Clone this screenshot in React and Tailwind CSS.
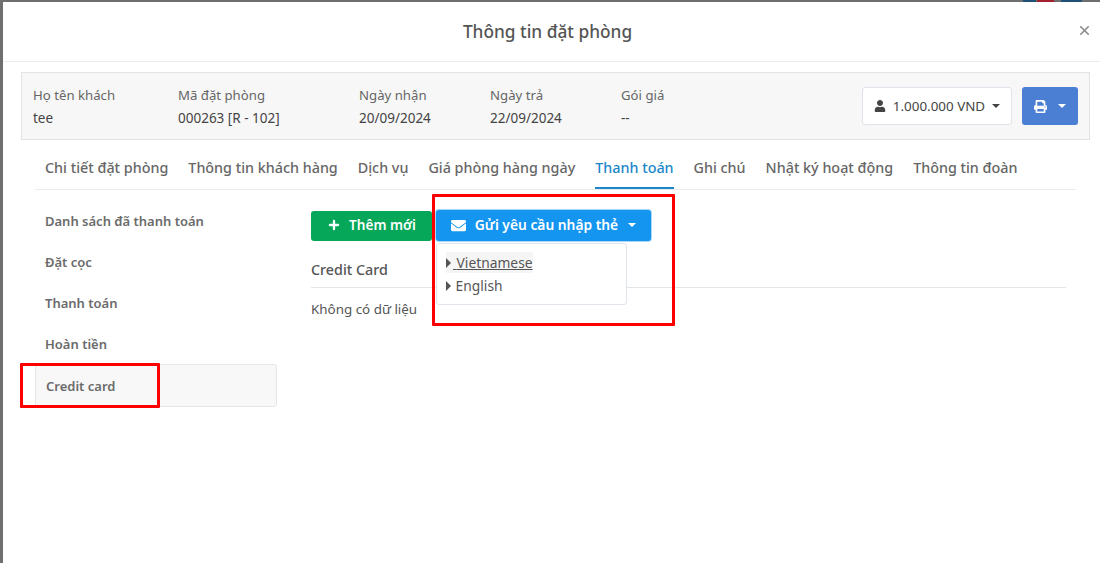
import React from 'react';
import { Plus, X } from 'lucide-react';
import { FaUser, FaPrint, FaEnvelope } from 'react-icons/fa';

const INFO = [
  { label: 'Họ tên khách', value: 'tee', width: 'w-[145px]' },
  { label: 'Mã đặt phòng', value: '000263 [R - 102]', width: 'w-[181px]' },
  { label: 'Ngày nhận', value: '20/09/2024', width: 'w-[131px]' },
  { label: 'Ngày trả', value: '22/09/2024', width: 'w-[131px]' },
  { label: 'Gói giá', value: '--', width: 'w-[100px]' },
];

const TABS = ['Chi tiết đặt phòng', 'Thông tin khách hàng', 'Dịch vụ', 'Giá phòng hàng ngày', 'Thanh toán', 'Ghi chú', 'Nhật ký hoạt động', 'Thông tin đoàn'];
const SIDE = ['Danh sách đã thanh toán', 'Đặt cọc', 'Thanh toán'];

const Caret = ({ className }) => (
  <span className={`inline-block w-0 h-0 border-x-[4px] border-x-transparent border-t-[4px] ${className}`}></span>
);

const RightCaret = () => (
  <span className="inline-block w-0 h-0 border-y-[5px] border-y-transparent border-l-[5px] border-l-[#555] mr-[2px]"></span>
);

export default function App() {
  return (
    <div className="relative h-[563px] w-[1100px] overflow-hidden bg-[#6f6f6f] pl-[3px] pt-[2px] font-['Noto_Sans','Open_Sans',sans-serif] text-[14px] text-[#555]">
      {/* bits of the page behind the modal */}
      <span className="absolute left-[1023px] top-0 h-[2px] w-[13px] bg-[#1f5277]"></span>
      <span className="absolute left-[1037px] top-0 h-[2px] w-[17px] bg-[#a32030]"></span>
      <span className="absolute left-[1061px] top-0 h-[2px] w-[21px] bg-[#1f5277]"></span>

      <div className="h-full bg-white">
        {/* header */}
        <div className="relative h-[60px] border-b border-[#e9ecef] flex items-center justify-center">
          <h2 className="ml-[-8px] text-[17.3px] font-medium text-[#555]">Thông tin đặt phòng</h2>
          <button className="absolute right-[8px] top-[21px] text-[#8a8a8a]"><X size={15} strokeWidth={2.5} /></button>
        </div>

        <div className="px-[18px] pt-[10px]">
          {/* booking info */}
          <div className="h-[68px] w-[1069px] border border-[#e3e3e3] bg-[#f7f7f7] pl-[11px] pr-[11px] flex items-center justify-between">
            <div className="flex">
              {INFO.map((item) => (
                <div key={item.label} className={item.width}>
                  <div className="leading-[20px] text-[#666] mb-[3px] text-[13.2px]">{item.label}</div>
                  <div className="leading-[20px] text-[#444] text-[13.5px]">{item.value}</div>
                </div>
              ))}
            </div>
            <div className="flex gap-[10px]">
              <button className="h-[38px] w-[150px] rounded-[3px] border border-[#dfe3ea] bg-white flex items-center justify-center gap-[7px] text-[13.4px] text-[#444]">
                <FaUser size={12} className="text-[#444]" />
                <span>1.000.000 VND</span>
                <Caret className="border-t-[#444]" />
              </button>
              <button className="h-[38px] w-[56px] rounded-[3px] bg-[#4a7fd4] flex items-center justify-center gap-[11px] text-white">
                <FaPrint size={13} />
                <Caret className="border-t-white" />
              </button>
            </div>
          </div>

          {/* tabs */}
          <div className="ml-[14px] mt-[11px] w-[1041px] h-[39px] border-b border-[#e9ecef] flex gap-[20px] pl-[10px]">
            {TABS.map((tab) => (
              <div
                key={tab}
                className={`h-[38px] leading-[33px] text-[14.33px] font-medium ${tab === 'Thanh toán' ? 'border-b-2 border-[#1b87c9] text-[#1b87c9]' : 'text-[#666]'}`}
              >
                {tab}
              </div>
            ))}
          </div>

          <div className="flex ml-[14px] mt-[11px]">
            {/* side nav */}
            <div className="w-[242px]">
              {SIDE.map((item) => (
                <div key={item} className="h-[41px] pl-[10px] leading-[41px] text-[13px] font-semibold text-[#6b6b6b]">{item}</div>
              ))}
              <div className="h-[40px] pl-[10px] leading-[41px] text-[13px] font-semibold text-[#6b6b6b]">Hoàn tiền</div>
              <div className="h-[43px] rounded-[3px] border border-[#e6e6ea] bg-[#f8f8f8] pl-[10px] leading-[42px] text-[13px] font-semibold text-[#6b6b6b]">Credit card</div>
            </div>

            {/* content */}
            <div className="ml-[34px] w-[755px] pt-[9px]">
              <div className="flex gap-[4px] items-center">
                <button className="h-[30px] w-[121px] pb-[1px] rounded-[3px] bg-[#06a759] text-white text-[13.6px] font-semibold flex items-center justify-center gap-[8px]">
                  <Plus size={14} strokeWidth={4} />Thêm mới
                </button>
                <div className="relative">
                  <button className="h-[31px] w-[215px] pb-[1px] rounded-[3px] bg-[#1496f0] ring-1 ring-[#a9d6f7] text-white text-[13.8px] font-semibold flex items-center justify-center gap-[9px]">
                    <FaEnvelope size={15} />Gửi yêu cầu nhập thẻ
                    <Caret className="border-t-white ml-[1px]" />
                  </button>
                  {/* open dropdown menu */}
                  <div className="absolute left-0 top-[33px] w-[191px] h-[62px] z-10 rounded-[3px] border border-[#dfe3ea] bg-white pl-[9px] pt-[8px] text-[13.8px] text-[#555]">
                    <div className="h-[23px] leading-[21px]">
                      <span className="inline-block bg-[#f5f5f5]"><RightCaret /><span className="underline decoration-[#555]">{'\u00a0'}Vietnamese</span></span>
                    </div>
                    <div className="h-[23px] leading-[21px]"><RightCaret /><span className="ml-[-1px]">{'\u00a0'}English</span></div>
                  </div>
                </div>
              </div>
              <div className="mt-[17px] h-[30px] border-b border-[#e2e5e9] text-[14.3px] font-medium leading-[24px] text-[#555]">Credit Card</div>
              <div className="mt-[11px] leading-[20px] text-[13.4px] text-[#555]">Không có dữ liệu</div>
            </div>
          </div>
        </div>
      </div>

      {/* red annotation boxes */}
      <div className="absolute z-20 left-[432px] top-[194px] h-[132px] w-[243px] rounded-[1px] border-[3px] border-[#ff0000]"></div>
      <div className="absolute z-20 left-[20px] top-[363px] h-[45px] w-[140px] rounded-[1px] border-[3px] border-[#ff0000]"></div>
    </div>
  );
}
